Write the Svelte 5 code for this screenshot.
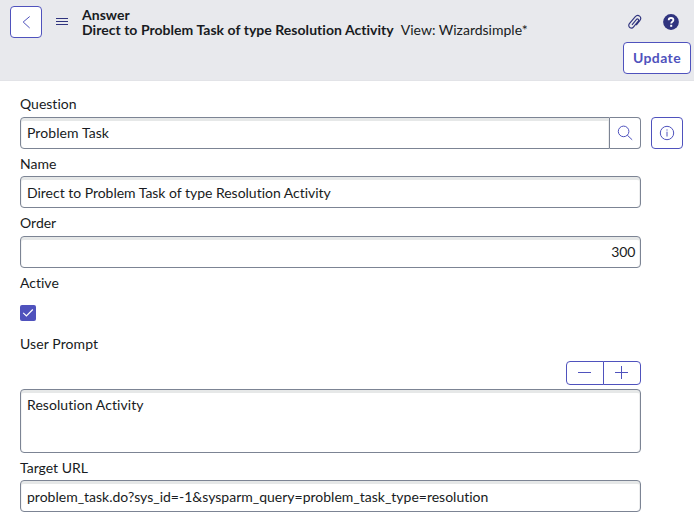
<script>
  let question = $state('Problem Task');
  let name = $state('Direct to Problem Task of type Resolution Activity');
  let order = $state('300');
  let active = $state(true);
  let prompt = $state('Resolution Activity');
  let url = $state('problem_task.do?sys_id=-1&sysparm_query=problem_task_type=resolution');
</script>

<div class="page">
  <header>
    <button class="square back" aria-label="Back">
      <svg width="30" height="30" viewBox="0 0 30 30"><path d="M18.700 9.500 12.200 15l6.500 6" /></svg>
    </button>
    <button class="bare menu" aria-label="Menu">
      <svg width="12" height="9" viewBox="0 0 12 9"><path d="M0 1.500h12M0 4.500h12M0 7.500h12" /></svg>
    </button>
    <div class="title">
      <div class="strong">Answer</div>
      <div><span class="strong">Direct to Problem Task of type Resolution Activity</span><span class="view">View: Wizardsimple*</span></div>
    </div>
    <div class="actions">
      <div class="tools">
        <button class="bare" aria-label="Attachments">
          <svg class="clip" width="16" height="16" viewBox="0 0 16 16"><path d="M5 10.800 9.300 5.600c.6-.7 1.400-.7 1.900-.3.600.5.600 1.200.1 1.900l-4.700 5.700c-1 1.300-2.600 1.500-3.800.6s-1.400-2.500-.4-3.800l5.700-6.800c1.300-1.600 3.100-1.900 4.500-.8s1.400 2.900.2 4.500L9.200 11.100" /></svg>
        </button>
        <button class="bare" aria-label="Help">
          <svg class="help" width="16" height="16" viewBox="0 0 16 16"><circle cx="8" cy="8" r="7.900" /><path d="M5.700 6.300C5.700 4.700 6.700 4 8 4s2.400.8 2.400 2.100C10.400 7.700 8.200 7.700 8.200 9.400" /><rect x="7.200" y="10.800" width="2" height="2" /></svg>
        </button>
      </div>
      <button class="update">Update</button>
    </div>
  </header>

  <form onsubmit={(e) => e.preventDefault()}>
    <label for="question">Question</label>
    <div class="row">
      <div class="group">
        <input id="question" class="field raised" type="text" bind:value={question} />
        <button class="lookup" aria-label="Look up">
          <svg width="16" height="16" viewBox="0 0 16 16"><circle cx="6.600" cy="6.400" r="5.300" /><path d="m10.300 10.200 4.900 4.600" /></svg>
        </button>
      </div>
      <button class="square" aria-label="Preview record">
        <svg width="16" height="16" viewBox="0 0 16 16"><circle cx="8" cy="8" r="6.700" /><path d="M8 6.700v4.800M8 4.400v1.200" /></svg>
      </button>
    </div>

    <label class="low" for="name">Name</label>
    <input id="name" class="field tight" type="text" bind:value={name} />

    <label class="low tall" for="order">Order</label>
    <input id="order" class="field number raised" type="text" bind:value={order} />

    <label class="low" for="active">Active</label>
    <button id="active" class="check" class:off={!active} role="checkbox" aria-checked={active} aria-label="Active" onclick={() => (active = !active)}>
      <svg width="16" height="16" viewBox="0 0 16 16"><path d="m3.200 7.800 3.200 3.200 6.400-6.500" /></svg>
    </button>

    <label class="prompt-label" for="prompt">User Prompt</label>
    <div class="sizer">
      <button aria-label="Shrink"><svg width="14" height="14" viewBox="0 0 14 14"><path d="M0 6.500h13" /></svg></button>
      <button aria-label="Grow"><svg width="14" height="14" viewBox="0 0 14 14"><path d="M0 6.500h13M6.500 0v13" /></svg></button>
    </div>
    <textarea id="prompt" class="field" bind:value={prompt}></textarea>

    <label class="low" for="url">Target URL</label>
    <input id="url" class="field" type="text" bind:value={url} />
  </form>
</div>

<style>
  .page {
    height: 519px;
    overflow: hidden;
    background: #fff;
    color: #181b22;
    font: 14px/20px Lato, sans-serif;
    font-variant-ligatures: none;
  }
  .page * { box-sizing: border-box; }
  button, input, textarea { font: inherit; font-variant-ligatures: none; color: inherit; margin: 0; }
  button {
    display: flex;
    align-items: center;
    justify-content: center;
    padding: 0;
    background: #fff;
    border: 1px solid #4f52bd;
    color: #4f52bd;
  }
  svg { display: block; flex: none; fill: none; stroke: currentColor; stroke-width: 1; }
  header {
    display: flex;
    align-items: flex-start;
    height: 81px;
    padding: 6px 3px 0 10px;
    background: #e8e9ed;
    border-bottom: 1px solid #e2e3e7;
  }
  .square { width: 32px; height: 32px; border-radius: 4px; flex: none; }
  .bare { border: 0; background: none; color: #30347f; }
  .menu { width: 12px; height: 9px; margin: 11px 14px 0; }
  .menu svg { stroke-width: 1.200; }
  .title { flex: 1; padding-top: 1px; line-height: 15px; white-space: nowrap; }
  .strong { font-weight: 700; letter-spacing: 0.035px; }
  .view { margin-left: 7px; }
  .actions { display: flex; flex-direction: column; align-items: flex-end; }
  .tools { display: flex; gap: 20px; padding: 8px 12px 0 0; height: 36px; align-items: flex-start; }
  .clip { stroke-width: 1.150; }
  .help circle { fill: #30347f; stroke: none; }
  .help path { stroke: #fff; stroke-width: 1.800; }
  .help rect { fill: #fff; stroke: none; }
  .update { width: 68px; height: 32px; border-radius: 4px; font-weight: 700; letter-spacing: 0.4px; }
  form { display: flex; flex-direction: column; width: 621px; margin-left: 20px; padding-top: 9px; }
  label { height: 27px; padding-top: 4px; line-height: 20px; }
  .low { padding-top: 5px; }
  .tall { height: 28px; }
  .row { display: flex; gap: 10px; width: 663px; }
  .group { display: flex; width: 621px; }
  .field {
    width: 100%;
    height: 32px;
    padding: 0 6px;
    border: 1px solid #7c8494;
    border-radius: 4px;
    background: #fff;
    box-shadow: inset 0 3px 0 #e6e8e8, inset -1px 0 0 #edeeef, inset 1px 0 0 #f3f4f4;
    outline: none;
  }
  .raised { padding-bottom: 2px; }
  .tight { letter-spacing: -0.02px; }
  .number { text-align: right; padding-right: 4.500px; }
  .group .field { flex: 1; width: auto; border-radius: 4px 0 0 4px; letter-spacing: 0.08px; }
  .lookup { width: 31px; border-color: #7c8494; border-left: 0; border-radius: 0 4px 4px 0; }
  .check { width: 16px; height: 16px; margin-top: 10px; border: 0; border-radius: 2px; background: #4f52bd; color: #fff; }
  .check svg { stroke-width: 1.200; }
  .off { box-shadow: inset 0 0 0 1px #7c8494; background: #fff; }
  .prompt-label { height: 40px; padding-top: 13px; letter-spacing: 0.1px; }
  .sizer { display: flex; align-self: flex-end; margin-bottom: 4px; }
  .sizer button { width: 38px; height: 24px; border-radius: 4px 0 0 4px; }
  .sizer button + button { margin-left: -1px; border-radius: 0 4px 4px 0; }
  textarea.field { height: 64px; padding-top: 5px; resize: none; display: block; letter-spacing: 0.07px; }
</style>
